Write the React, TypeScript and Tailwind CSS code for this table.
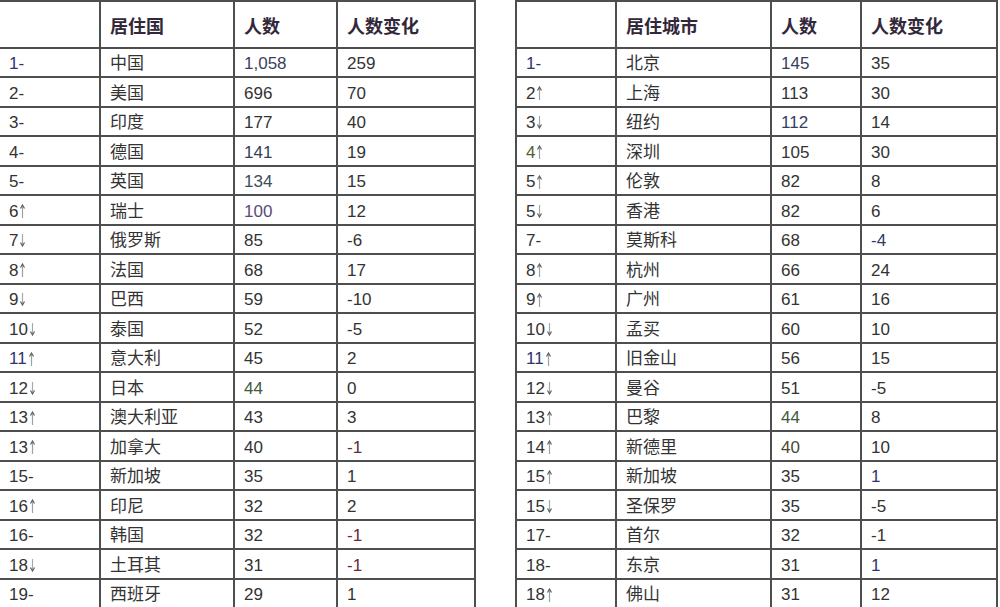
import React from "react";

type Move = "up" | "down" | "flat";

type Row = {
  rank: string;
  move: Move;
  name: string;
  count: string;
  change: string;
  rankColor?: string;
  countColor?: string;
  changeColor?: string;
};

const countries: Row[] = [
  { rank: "1", move: "flat", name: "中国", count: "1,058", change: "259", rankColor: "text-[#2f3370]", countColor: "text-[#3b3f5c]" },
  { rank: "2", move: "flat", name: "美国", count: "696", change: "70" },
  { rank: "3", move: "flat", name: "印度", count: "177", change: "40" },
  { rank: "4", move: "flat", name: "德国", count: "141", change: "19", countColor: "text-[#35405a]" },
  { rank: "5", move: "flat", name: "英国", count: "134", change: "15", countColor: "text-[#3a4d58]" },
  { rank: "6", move: "up", name: "瑞士", count: "100", change: "12", countColor: "text-[#5a4a7a]" },
  { rank: "7", move: "down", name: "俄罗斯", count: "85", change: "-6" },
  { rank: "8", move: "up", name: "法国", count: "68", change: "17" },
  { rank: "9", move: "down", name: "巴西", count: "59", change: "-10" },
  { rank: "10", move: "down", name: "泰国", count: "52", change: "-5" },
  { rank: "11", move: "up", name: "意大利", count: "45", change: "2", rankColor: "text-[#2f3370]" },
  { rank: "12", move: "down", name: "日本", count: "44", change: "0", countColor: "text-[#3f5a3a]" },
  { rank: "13", move: "up", name: "澳大利亚", count: "43", change: "3" },
  { rank: "13", move: "up", name: "加拿大", count: "40", change: "-1", changeColor: "text-[#5a3038]" },
  { rank: "15", move: "flat", name: "新加坡", count: "35", change: "1" },
  { rank: "16", move: "up", name: "印尼", count: "32", change: "2" },
  { rank: "16", move: "flat", name: "韩国", count: "32", change: "-1", changeColor: "text-[#6a2a34]" },
  { rank: "18", move: "down", name: "土耳其", count: "31", change: "-1", changeColor: "text-[#6a2a34]" },
  { rank: "19", move: "flat", name: "西班牙", count: "29", change: "1" },
];

const cities: Row[] = [
  { rank: "1", move: "flat", name: "北京", count: "145", change: "35", rankColor: "text-[#2f3370]", countColor: "text-[#36405e]" },
  { rank: "2", move: "up", name: "上海", count: "113", change: "30" },
  { rank: "3", move: "down", name: "纽约", count: "112", change: "14", countColor: "text-[#33405e]" },
  { rank: "4", move: "up", name: "深圳", count: "105", change: "30", rankColor: "text-[#55602e]" },
  { rank: "5", move: "up", name: "伦敦", count: "82", change: "8" },
  { rank: "5", move: "down", name: "香港", count: "82", change: "6" },
  { rank: "7", move: "flat", name: "莫斯科", count: "68", change: "-4", changeColor: "text-[#2f3a66]" },
  { rank: "8", move: "up", name: "杭州", count: "66", change: "24" },
  { rank: "9", move: "up", name: "广州", count: "61", change: "16" },
  { rank: "10", move: "down", name: "孟买", count: "60", change: "10" },
  { rank: "11", move: "up", name: "旧金山", count: "56", change: "15", rankColor: "text-[#2f3370]" },
  { rank: "12", move: "down", name: "曼谷", count: "51", change: "-5" },
  { rank: "13", move: "up", name: "巴黎", count: "44", change: "8", countColor: "text-[#3f5a3a]" },
  { rank: "14", move: "up", name: "新德里", count: "40", change: "10", countColor: "text-[#4a4a30]" },
  { rank: "15", move: "up", name: "新加坡", count: "35", change: "1", changeColor: "text-[#2f3370]" },
  { rank: "15", move: "down", name: "圣保罗", count: "35", change: "-5" },
  { rank: "17", move: "flat", name: "首尔", count: "32", change: "-1" },
  { rank: "18", move: "flat", name: "东京", count: "31", change: "1", changeColor: "text-[#2f3370]" },
  { rank: "18", move: "up", name: "佛山", count: "31", change: "12" },
];

const MoveMark: React.FC<{ move: Move }> = ({ move }) => {
  if (move === "flat") return <span>-</span>;
  if (move === "up") {
    return (
      <svg width="7" height="14" viewBox="0 0 7 14" className="inline-block align-[-3px] ml-[1px]">
        <path d="M3.5 2 V14" stroke="#a0a0a0" strokeWidth="1.2" />
        <path d="M1.5 4.5 L3.5 1 L5.5 4.5" fill="none" stroke="#606060" strokeWidth="1.2" />
      </svg>
    );
  }
  return (
    <svg width="7" height="13" viewBox="0 0 7 13" className="inline-block align-[-5px] ml-[1px]">
      <path d="M3.5 0 V11" stroke="#a8a8a8" strokeWidth="1.2" />
      <path d="M1.5 8.5 L3.5 12 L5.5 8.5" fill="none" stroke="#606060" strokeWidth="1.2" />
    </svg>
  );
};

type TableProps = {
  place: string;
  rows: Row[];
  cols: string;
  className?: string;
};

const cell = "border-r-2 border-b-2 border-[#4e4e4e] pl-[9px] flex items-center h-[29.5px] pt-[3px]";
const head = "border-r-2 border-b-2 border-[#4e4e4e] pl-[9px] flex items-center h-[46.7px] pt-[5px] text-[18px] font-bold text-[#33283a]";

const RankTable: React.FC<TableProps> = ({ place, rows, cols, className }) => {
  return (
    <div className={`grid ${cols} border-t-2 border-l-2 border-[#4e4e4e] self-start ${className ?? ""}`}>
      <div className={head}></div>
      <div className={head}>{place}</div>
      <div className={head}>人数</div>
      <div className={head}>人数变化</div>
      {rows.map((r, i) => (
        <React.Fragment key={i}>
          <div className={`${cell} ${r.rankColor ?? ""}`}>
            {r.rank}
            <MoveMark move={r.move} />
          </div>
          <div className={cell}>{r.name}</div>
          <div className={`${cell} ${r.countColor ?? ""}`}>{r.count}</div>
          <div className={`${cell} ${r.changeColor ?? ""}`}>{r.change}</div>
        </React.Fragment>
      ))}
    </div>
  );
};

export default function App() {
  return (
    <div className="w-[1000px] h-[607px] overflow-hidden bg-white text-[17px] leading-none text-[#333333] font-[family-name:Liberation_Sans,Noto_Sans_CJK_SC,sans-serif]">
      <div className="flex gap-[39px] -ml-[2px]">
        <RankTable place="居住国" rows={countries} cols="grid-cols-[101px_134px_103px_138px]" />
        <RankTable place="居住城市" rows={cities} cols="grid-cols-[100px_155px_90px_136px]" />
      </div>
    </div>
  );
}
